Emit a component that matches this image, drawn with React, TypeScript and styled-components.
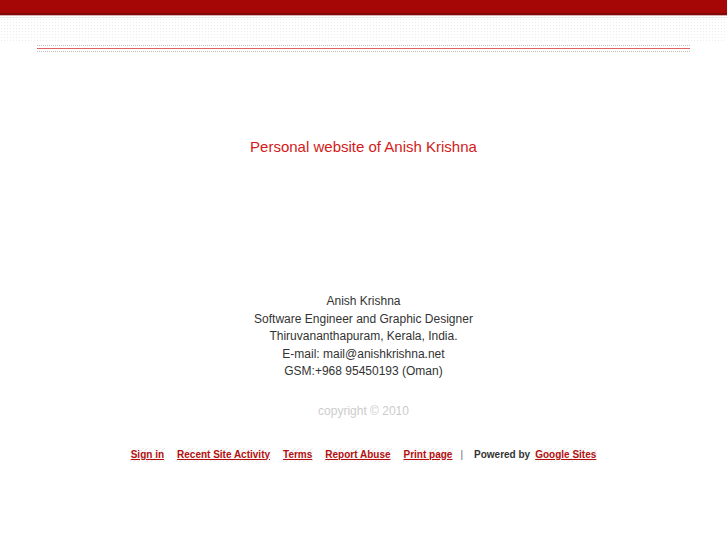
import React from "react";
import styled, { createGlobalStyle } from "styled-components";

const GlobalStyle = createGlobalStyle`
  html, body {
    margin: 0;
    padding: 0;
    background: #ffffff;
    font-family: "Liberation Sans", Arial, sans-serif;
  }
`;

const Page = styled.div`
  width: 100%;
  min-height: 545px;
`;

const TopBar = styled.div`
  height: 13px;
  background: #a50606;
  border-bottom: 2px solid #7e0a0a;
  box-shadow: 0 1px 0 #d9b0b0;
`;

const Texture = styled.div`
  height: 24px;
  margin-top: 2px;
  background-color: #ffffff;
  background-image: radial-gradient(#ececec 0.8px, transparent 0.9px);
  background-size: 3px 3px;
  border-top: 1px solid #ebebeb;
`;

const Rule = styled.div`
  margin: 3px 37px 0;
  display: flex;
  flex-direction: column;
  gap: 2px;
`;

const DottedLine = styled.div`
  height: 1px;
  background-image: linear-gradient(to right, #bdbdbd 50%, transparent 50%);
  background-size: 2px 1px;
`;

const RedLine = styled.div`
  height: 1px;
  background: #e06464;
`;

const Main = styled.main`
  display: flex;
  flex-direction: column;
  align-items: center;
  text-align: center;
`;

const Title = styled.h1`
  margin: 86px 0 0;
  font-size: 15px;
  font-weight: normal;
  color: #d21a1a;
  line-height: 18px;
`;

const Contact = styled.div`
  margin-top: 137px;
  font-size: 12px;
  line-height: 17.5px;
  color: #333333;
`;

const Copyright = styled.div`
  margin-top: 23px;
  font-size: 12px;
  color: #cccccc;
`;

const Footer = styled.div`
  margin-top: 30px;
  display: flex;
  align-items: center;
  gap: 11px;
  font-size: 10px;
  font-weight: bold;
  color: #333333;
`;

const FooterLink = styled.a`
  color: #b30f0f;
  text-decoration: underline;
  padding: 1px 1px 2px;
  background-image: repeating-linear-gradient(
    135deg,
    #f0f0f0 0,
    #f0f0f0 1px,
    transparent 1px,
    transparent 3px
  );
`;

const Sep = styled.span`
  color: #666666;
  font-weight: normal;
  margin-left: -4px;
`;

const Powered = styled.span`
  display: flex;
  gap: 4px;
  align-items: center;
`;

const links = ["Sign in", "Recent Site Activity", "Terms", "Report Abuse", "Print page"];

export default function App() {
  return (
    <Page>
      <GlobalStyle />
      <TopBar />
      <Texture />
      <Rule>
        <DottedLine />
        <RedLine />
        <DottedLine />
      </Rule>
      <Main>
        <Title>Personal website of Anish Krishna</Title>
        <Contact>
          Anish Krishna
          <br />
          Software Engineer and Graphic Designer
          <br />
          Thiruvananthapuram, Kerala, India.
          <br />
          E-mail: mail@anishkrishna.net
          <br />
          GSM:+968 95450193 (Oman)
        </Contact>
        <Copyright>copyright © 2010</Copyright>
        <Footer>
          {links.map((l) => (
            <FooterLink key={l} href="#">
              {l}
            </FooterLink>
          ))}
          <Sep>|</Sep>
          <Powered>
            Powered by <FooterLink href="#">Google Sites</FooterLink>
          </Powered>
        </Footer>
      </Main>
    </Page>
  );
}
